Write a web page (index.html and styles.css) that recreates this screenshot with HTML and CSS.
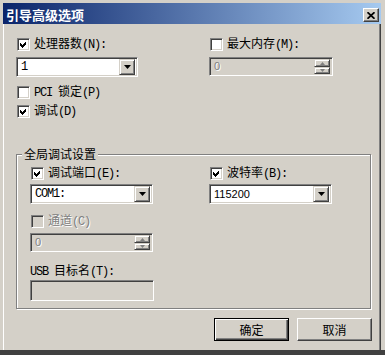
FILE: index.html
```html
<!DOCTYPE html>
<html lang="zh-CN">
<head>
<meta charset="utf-8">
<link rel="stylesheet" href="styles.css">
</head>
<body>
<div class="frame">
  <div class="titlebar">
    <span class="title">引导高级选项</span>
    <span class="close"><svg width="8" height="7" viewBox="0 0 8 7"><path d="M0.5 0.2 L7.5 6.8 M7.5 0.2 L0.5 6.8" stroke="#000" stroke-width="1.7"/></svg></span>
  </div>
  <div class="body">
    <div class="grid top">
      <div class="col">
        <div class="check"><span class="box"><svg class="tick" width="9" height="9" viewBox="0 0 9 9"><polygon points="1,3 3,5 7,1 7,4 3,8 1,6" fill="#000"/></svg></span><span>处理器数<span class="en">(N):</span></span></div>
        <div class="combo"><span class="val en">1</span><span class="drop"><svg width="7" height="4" viewBox="0 0 7 4"><polygon points="0,0 7,0 3.5,4" fill="#000"/></svg></span></div>
      </div>
      <div class="col">
        <div class="check"><span class="box"></span><span>最大内存<span class="en">(M):</span></span></div>
        <div class="spin disabled"><span class="val">0</span><span class="spinbtns"><span class="sb"><svg width="5" height="3" viewBox="0 0 5 3"><polygon points="2.5,0 5,3 0,3" fill="#808080"/></svg></span><span class="sb"><svg width="5" height="3" viewBox="0 0 5 3"><polygon points="0,0 5,0 2.5,3" fill="#808080"/></svg></span></span></div>
      </div>
    </div>
    <div class="check pci"><span class="box"></span><span><span class="en">PCI </span>锁定<span class="en">(P)</span></span></div>
    <div class="check dbg"><span class="box"><svg class="tick" width="9" height="9" viewBox="0 0 9 9"><polygon points="1,3 3,5 7,1 7,4 3,8 1,6" fill="#000"/></svg></span><span>调试<span class="en">(D)</span></span></div>

    <div class="group">
      <div class="legend">全局调试设置</div>
      <div class="grid inner">
        <div class="col">
          <div class="check"><span class="box"><svg class="tick" width="9" height="9" viewBox="0 0 9 9"><polygon points="1,3 3,5 7,1 7,4 3,8 1,6" fill="#000"/></svg></span><span>调试端口<span class="en">(E):</span></span></div>
          <div class="combo wide"><span class="val en">COM1:</span><span class="drop"><svg width="7" height="4" viewBox="0 0 7 4"><polygon points="0,0 7,0 3.5,4" fill="#000"/></svg></span></div>
        </div>
        <div class="col">
          <div class="check baud"><span class="box"><svg class="tick" width="9" height="9" viewBox="0 0 9 9"><polygon points="1,3 3,5 7,1 7,4 3,8 1,6" fill="#000"/></svg></span><span>波特率<span class="en">(B):</span></span></div>
          <div class="combo wide"><span class="val num">115200</span><span class="drop"><svg width="7" height="4" viewBox="0 0 7 4"><polygon points="0,0 7,0 3.5,4" fill="#000"/></svg></span></div>
        </div>
      </div>
      <div class="check disabled chan"><span class="box"></span><span>通道<span class="en">(C)</span></span></div>
      <div class="spin disabled narrow"><span class="val">0</span><span class="spinbtns"><span class="sb"><svg width="5" height="3" viewBox="0 0 5 3"><polygon points="2.5,0 5,3 0,3" fill="#808080"/></svg></span><span class="sb"><svg width="5" height="3" viewBox="0 0 5 3"><polygon points="0,0 5,0 2.5,3" fill="#808080"/></svg></span></span></div>
      <div class="label usb"><span class="en">USB </span>目标名<span class="en">(T):</span></div>
      <div class="field"></div>
    </div>

    <div class="buttons">
      <div class="btn default">确定</div>
      <div class="btn">取消</div>
    </div>
  </div>
</div>
<div class="bottom"></div>
</body>
</html>
```

FILE: styles.css
```css
* { box-sizing: border-box; }
html, body { margin: 0; padding: 0; }
body {
  width: 385px;
  height: 355px;
  overflow: hidden;
  background: #D4D0C8;
  font-family: "Noto Sans CJK SC", "Noto Sans CJK JP", sans-serif;
  font-size: 12px;
  color: #000;
}
.frame {
  margin-left: 3px;
  width: 378px;
  height: 350px;
  padding-top: 3px;
  display: flex;
  flex-direction: column;
}
.titlebar {
  flex: none;
  height: 21px;
  background: linear-gradient(to right, #0A246A, #A6CAF0);
  display: flex;
  align-items: flex-start;
  justify-content: space-between;
  padding: 2px 2px 0 3px;
}
.title {
  color: #fff;
  font-weight: bold;
  font-size: 13px;
  line-height: 20px;
}
.close {
  width: 16px;
  height: 14px;
  margin-top: 3px;
  background: #D4D0C8;
  border: 1px solid;
  border-color: #fff #404040 #404040 #fff;
  box-shadow: inset -1px -1px #808080;
  display: flex;
  align-items: center;
  justify-content: center;
}
.body {
  flex: 1;
  border-left: 1px solid #fff;
  border-right: 1px solid #404040;
  box-shadow: inset -1px 0 #808080;
  padding: 12px 8px 0 12px;
}
.en {
  font-family: "Liberation Mono", monospace;
  font-size: 12px;
  letter-spacing: -1.2px;
}
.num {
  font-family: "Liberation Sans", sans-serif;
  font-size: 11px;
}
.grid { display: grid; }
.grid.top { grid-template-columns: 193px 124px; }
.grid.inner { grid-template-columns: 179px 123px; margin-top: 3px; }
.col { display: flex; flex-direction: column; }

.check {
  display: flex;
  align-items: center;
  height: 16px;
  line-height: 16px;
  gap: 4px;
  white-space: nowrap;
}
.box {
  flex: none;
  width: 13px;
  height: 13px;
  margin-left: 1px;
  background: #fff;
  border: 1px solid;
  border-color: #808080 #fff #fff #808080;
  box-shadow: inset 1px 1px #404040, inset -1px -1px #D4D0C8;
  display: flex;
  align-items: center;
  justify-content: center;
}
.tick { shape-rendering: crispEdges; }
.check.pci { margin-top: 7px; }
.check.dbg { margin-top: 3px; }
.check.disabled { color: #808080; text-shadow: 1px 1px #fff; }
.check.disabled .box { background: #D4D0C8; }
.check.chan { margin-top: 9px; }

.combo, .spin, .field {
  display: flex;
  align-items: center;
  border: 1px solid;
  border-color: #808080 #fff #fff #808080;
  box-shadow: inset 1px 1px #404040, inset -1px -1px #D4D0C8;
  padding: 2px;
}
.combo {
  width: 122px;
  height: 20px;
  margin-top: 5px;
  background: #fff;
}
.combo.wide { width: 123px; margin-top: 3px; }
.val { flex: 1; padding-left: 2px; line-height: 16px; }
.drop, .sb {
  flex: none;
  background: #D4D0C8;
  border: 1px solid;
  border-color: #D4D0C8 #404040 #404040 #D4D0C8;
  box-shadow: inset 1px 1px #fff, inset -1px -1px #808080;
  display: flex;
  align-items: center;
  justify-content: center;
}
.drop { width: 16px; height: 16px; }
.spin {
  width: 124px;
  height: 19px;
  margin-top: 5px;
  background: #D4D0C8;
}
.spin.disabled .val {
  color: #808080;
  text-shadow: 1px 1px #fff;
  font-family: "Liberation Sans", sans-serif;
  font-size: 11px;
  line-height: 15px;
}
.spin.narrow { width: 123px; margin-top: 4px; }
.spinbtns {
  flex: none;
  width: 16px;
  height: 15px;
  display: flex;
  flex-direction: column;
}
.sb { height: 8px; }
.sb + .sb { height: 7px; }

.group {
  margin-top: 35px;
  width: 355px;
  border: 1px solid #808080;
  box-shadow: inset 1px 1px #fff, 1px 1px #fff;
  padding: 0 0 7px 13px;
}
.legend {
  width: fit-content;
  margin: -9px 0 0 -8px;
  padding: 0 2px;
  background: #D4D0C8;
  line-height: 16px;
}
.label.usb { margin-top: 10px; line-height: 16px; height: 16px; }
.field {
  width: 124px;
  height: 21px;
  margin-top: 2px;
  background: #D4D0C8;
}

.buttons {
  display: flex;
  justify-content: flex-end;
  gap: 8px;
  margin-top: 9px;
}
.btn {
  width: 75px;
  height: 23px;
  display: flex;
  align-items: center;
  justify-content: center;
  background: #D4D0C8;
  border: 1px solid;
  border-color: #fff #404040 #404040 #fff;
  box-shadow: inset -1px -1px #808080;
  line-height: 16px;
}
.btn.default {
  border: 1px solid #000;
  box-shadow: inset 1px 1px #fff, inset -1px -1px #404040, inset -2px -2px #808080;
}
.bottom {
  height: 5px;
  background: #404040;
}
```
